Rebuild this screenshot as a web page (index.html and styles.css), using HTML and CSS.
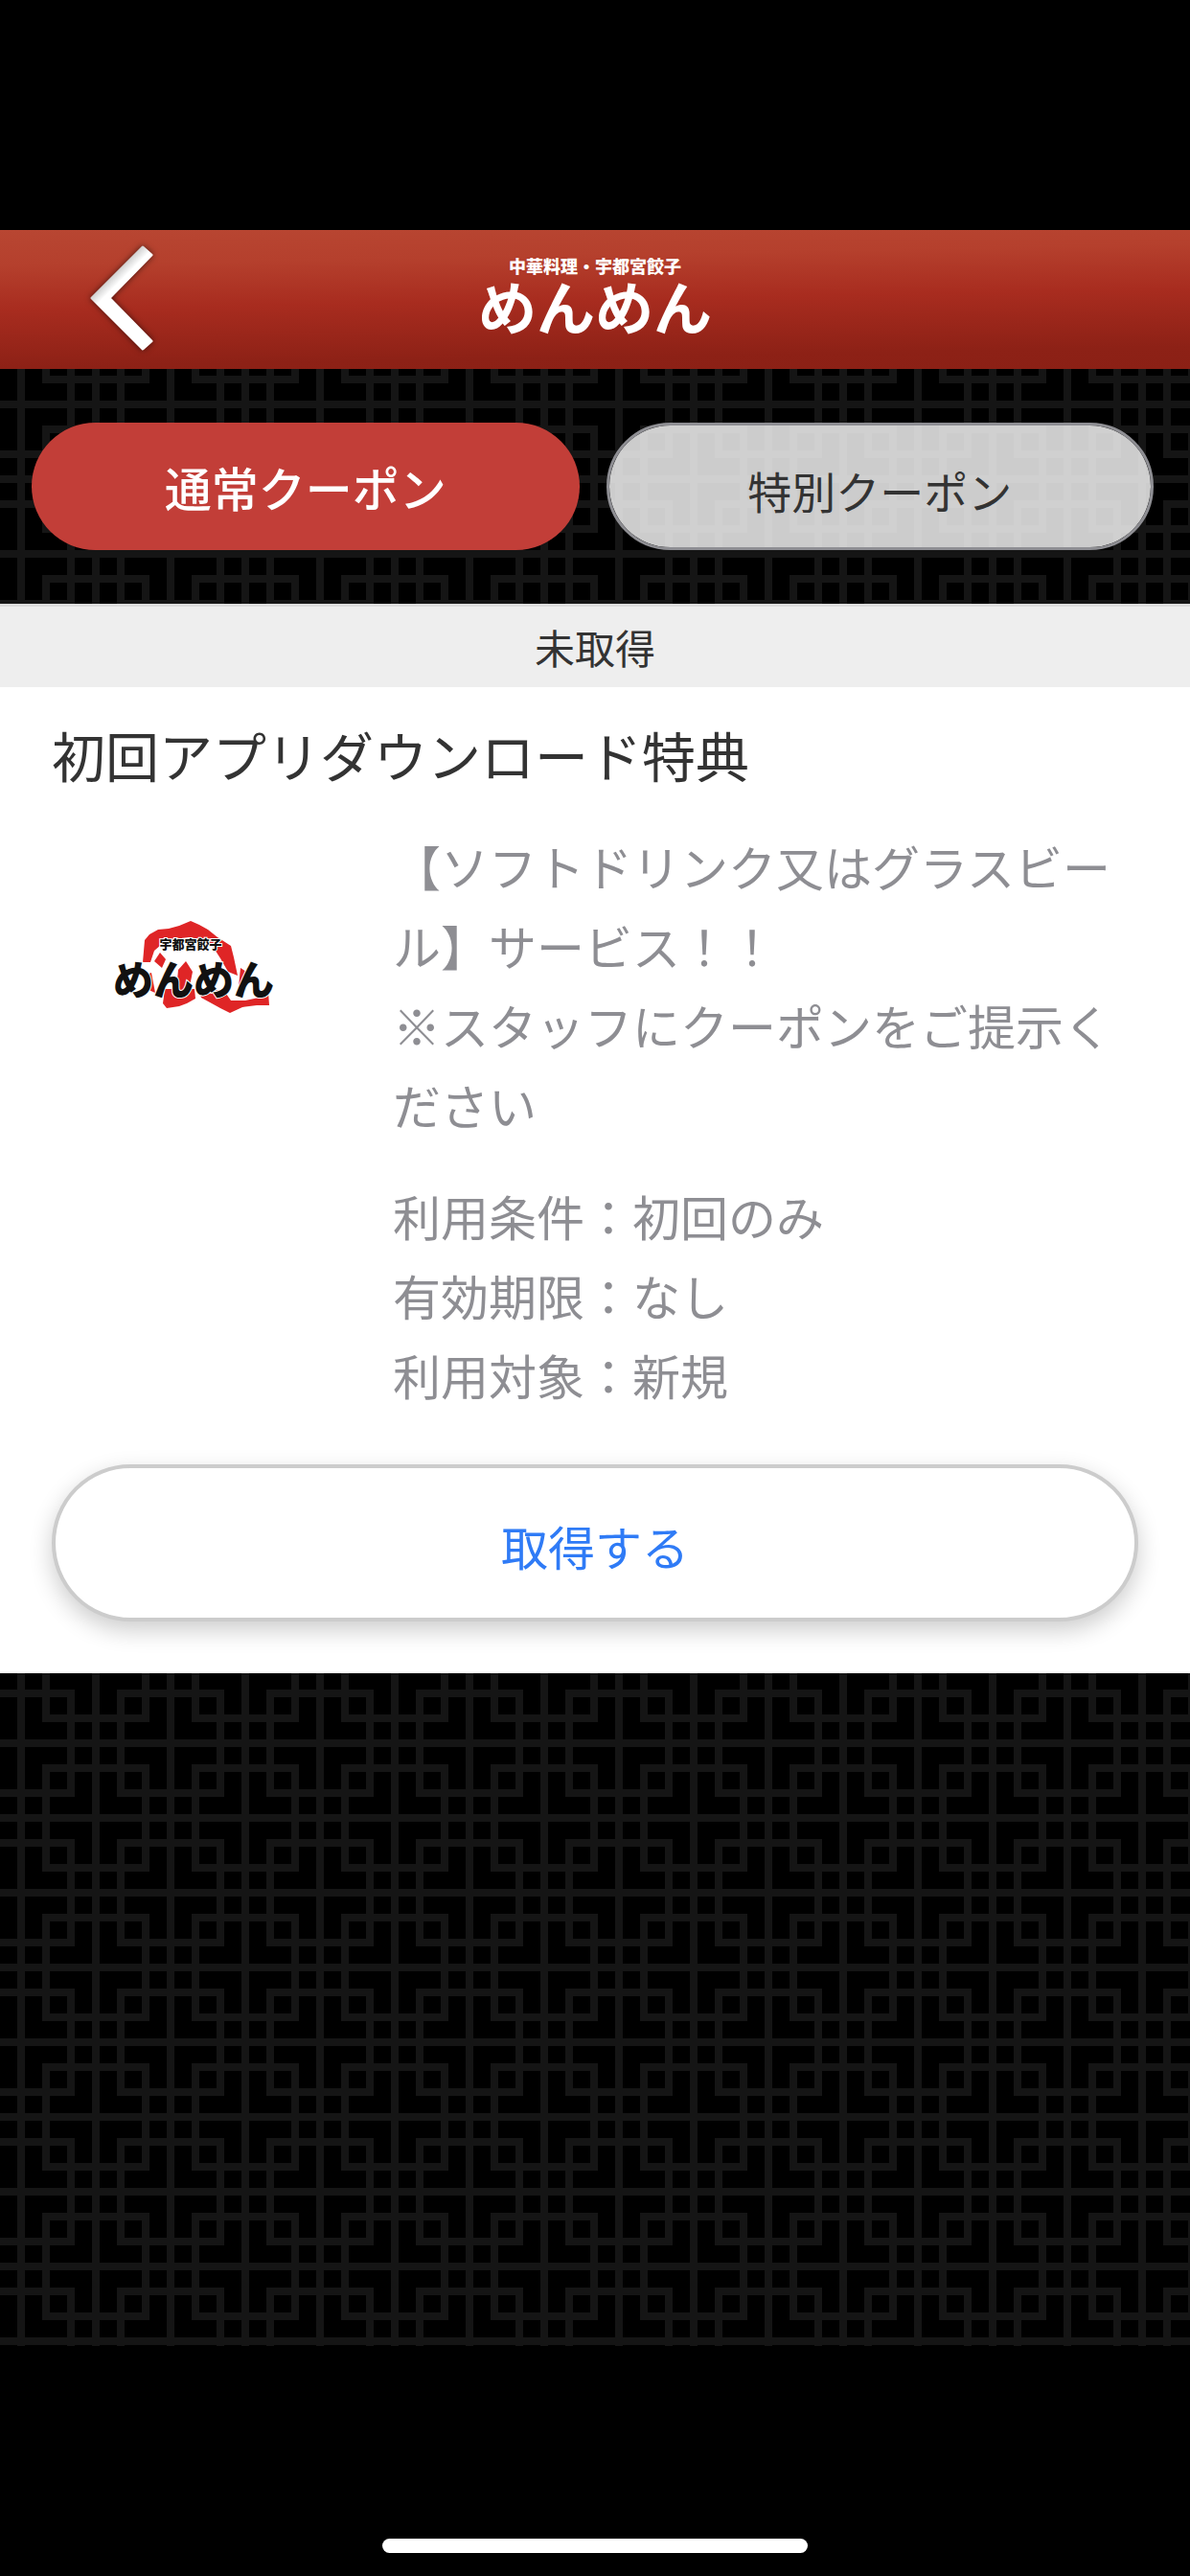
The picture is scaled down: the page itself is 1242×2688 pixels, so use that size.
FILE: index.html
```html
<!DOCTYPE html>
<html lang="ja">
<head>
    <meta charset="UTF-8">
    <meta name="viewport" content="width=device-width, initial-scale=1.0">
    <title>クーポン</title>
    <link rel="stylesheet" href="styles.css">
</head>
<body>
    <header class="header">
        <a class="back" href="#" aria-label="戻る">
            <svg width="82" height="128" viewBox="0 0 82 128">
                <defs>
                    <linearGradient id="arrowShade" gradientUnits="userSpaceOnUse" x1="33" y1="32" x2="43" y2="42">
                        <stop offset="0" stop-color="#bbb"/>
                        <stop offset="1" stop-color="#fff"/>
                    </linearGradient>
                </defs>
                <path d="M9 64 L62 11 L71 19 L27 64 L71 109 L62 117 Z" fill="url(#arrowShade)" stroke="url(#arrowShade)" stroke-width="3" stroke-linejoin="round"/>
            </svg>
        </a>
        <h1 class="brand">
            <span class="brand-sub">中華料理・宇都宮餃子</span>
            <span class="brand-name">めんめん</span>
        </h1>
    </header>

    <nav class="tabs lattice">
        <button type="button" class="tab tab-active">通常クーポン</button>
        <button type="button" class="tab">特別クーポン</button>
    </nav>

    <main>
        <h2 class="list-title">未取得</h2>
        <article class="coupon">
            <h3 class="coupon-title">初回アプリダウンロード特典</h3>
            <div class="coupon-body">
                <svg class="coupon-logo" viewBox="0 0 296 296" role="img" aria-label="宇都宮餃子 めんめん">
                    <g fill="#df2526">
                        <path d="M95 142 L97 119 L102 113 L111 108 L122 107 L133 104 L145 99 L154 103 L163 108 L173 116 L187 125 L190 137 L194 156 L184 152 L176 138 L167 124 L156 118 L143 116 L128 118 L114 124 L107 130 L103 142 Z"/>
                        <path d="M118 170 L149 170 L150 180 L141 185 L133 188 L120 190 L116 185 Z"/>
                        <path d="M153 170 L180 172 L187 182 L202 182 L216 179 L226 173 L227 187 L214 187 L199 189 L186 195 L176 190 L156 179 Z"/>
                        <path d="M107 141 L113 132 L119 139 L115 148 Z"/>
                        <path d="M132 150 L140 141 L147 152 L143 172 L130 172 Z"/>
                        <path d="M96 156 L104 153 L108 174 L99 170 Z"/>
                        <path d="M197 148 L206 154 L202 172 L195 168 Z"/>
                    </g>
                    <text class="logo-small" x="145" y="128" text-anchor="middle">宇都宮餃子</text>
                    <text class="logo-large" x="148" y="176" text-anchor="middle">めんめん</text>
                </svg>
                <div class="coupon-text">
                    <p>【ソフトドリンク又はグラスビール】サービス！！<br>※スタッフにクーポンをご提示ください</p>
                    <p>利用条件：初回のみ<br>有効期限：なし<br>利用対象：新規</p>
                </div>
            </div>
            <button type="button" class="get-button">取得する</button>
        </article>
    </main>

    <div class="backdrop lattice"></div>
    <footer class="footer">
        <div class="home-bar"></div>
    </footer>
</body>
</html>
```
FILE: styles.css
```css
* {
    box-sizing: border-box;
}
body {
    font-family: "Noto Sans CJK JP", sans-serif;
    background-color: #000;
    color: #333;
    display: flex;
    flex-direction: column;
    min-height: 100vh;
    margin: 0;
    padding-top: 240px;
}
h1, h2, h3, p {
    margin: 0;
    font-weight: 400;
}
button {
    font-family: inherit;
    cursor: pointer;
}
.header {
    display: grid;
    grid-template-columns: 1fr auto 1fr;
    align-items: center;
    height: 145px;
    padding: 0 87px 4px;
    background: linear-gradient(179deg, #b84632 0%, #b5402d 22%, #a82c1f 50%, #8d2116 86%, #8b2015 100%);
}
.back {
    display: flex;
}
.back svg {
    filter: drop-shadow(0 0 3px rgba(0, 0, 0, 0.6));
}
.brand {
    color: #fff;
    text-align: center;
    padding-bottom: 4px;
}
.brand-sub, .brand-name {
    display: block;
}
.brand-sub {
    font-size: 18px;
    font-weight: 900;
    line-height: 20px;
}
.brand-name {
    font-size: 61px;
    font-weight: 700;
    line-height: 64px;
}

/* lattice pattern behind the tabs and the empty area */
.lattice {
    background-color: #000;
    background-image: url("data:image/svg+xml,%3Csvg xmlns='http://www.w3.org/2000/svg' width='156' height='156'%3E%3Cpath fill='none' stroke='%23151515' stroke-width='8' d='M13 0V156M91 0V156M0 13H156M0 91H156M35 39H147M35 143H147M39 35V147M143 35V147M0 65H69M113 65H156M0 117H69M113 117H156M65 0V69M65 113V156M117 0V69M117 113V156'/%3E%3C/svg%3E");
}
.tabs {
    display: grid;
    grid-template-columns: 1fr 1fr;
    gap: 28px;
    padding: 56px 38px 56px 33px;
    background-position: 9px 24px;
}
.tab {
    height: 133px;
    border: 3px solid #8e8e93;
    border-radius: 67px;
    background-color: rgba(255, 255, 255, 0.8);
    background-clip: padding-box;
    color: #333;
    font-size: 46px;
    padding: 6px 0 0;
}
.tab-active {
    border: none;
    background-color: #c23e38;
    color: #fff;
    font-size: 49px;
    font-weight: 500;
    padding: 0;
}
.list-title {
    border-top: 3px solid #ddd;
    background-color: #eee;
    font-size: 42px;
    line-height: 84px;
    text-align: center;
}
.coupon {
    background-color: #fff;
    padding: 28px 54px 54px;
}
.coupon-title {
    font-size: 56px;
    line-height: 84px;
}
.coupon-body {
    display: flex;
    align-items: flex-start;
    gap: 60px;
    margin: 33px 0 52px;
}
.coupon-logo {
    flex: 0 0 296px;
    height: 296px;
}
.coupon-logo text {
    fill: #111;
    font-weight: 900;
    stroke: #fff;
    stroke-width: 2px;
    paint-order: stroke;
}
.logo-small {
    font-size: 13px;
}
.logo-large {
    font-size: 42px;
}
.coupon-text {
    color: #8e8e93;
    font-size: 50px;
    line-height: 83px;
}
.coupon-text p + p {
    margin-top: 33px;
}
.get-button {
    display: block;
    width: 100%;
    height: 164px;
    border: 4px solid #ccc;
    border-radius: 82px;
    background-color: #fff;
    box-shadow: 0 9px 24px rgba(0, 0, 0, 0.2);
    color: #2f7bf6;
    font-size: 49px;
    padding: 4px 0 0;
}
.backdrop {
    flex: 1;
    background-position: 9px 60px;
}
.footer {
    display: flex;
    justify-content: center;
    align-items: flex-end;
    height: 240px;
    padding-bottom: 24px;
}
.home-bar {
    width: 444px;
    height: 15px;
    border-radius: 8px;
    background-color: #fff;
}
```
